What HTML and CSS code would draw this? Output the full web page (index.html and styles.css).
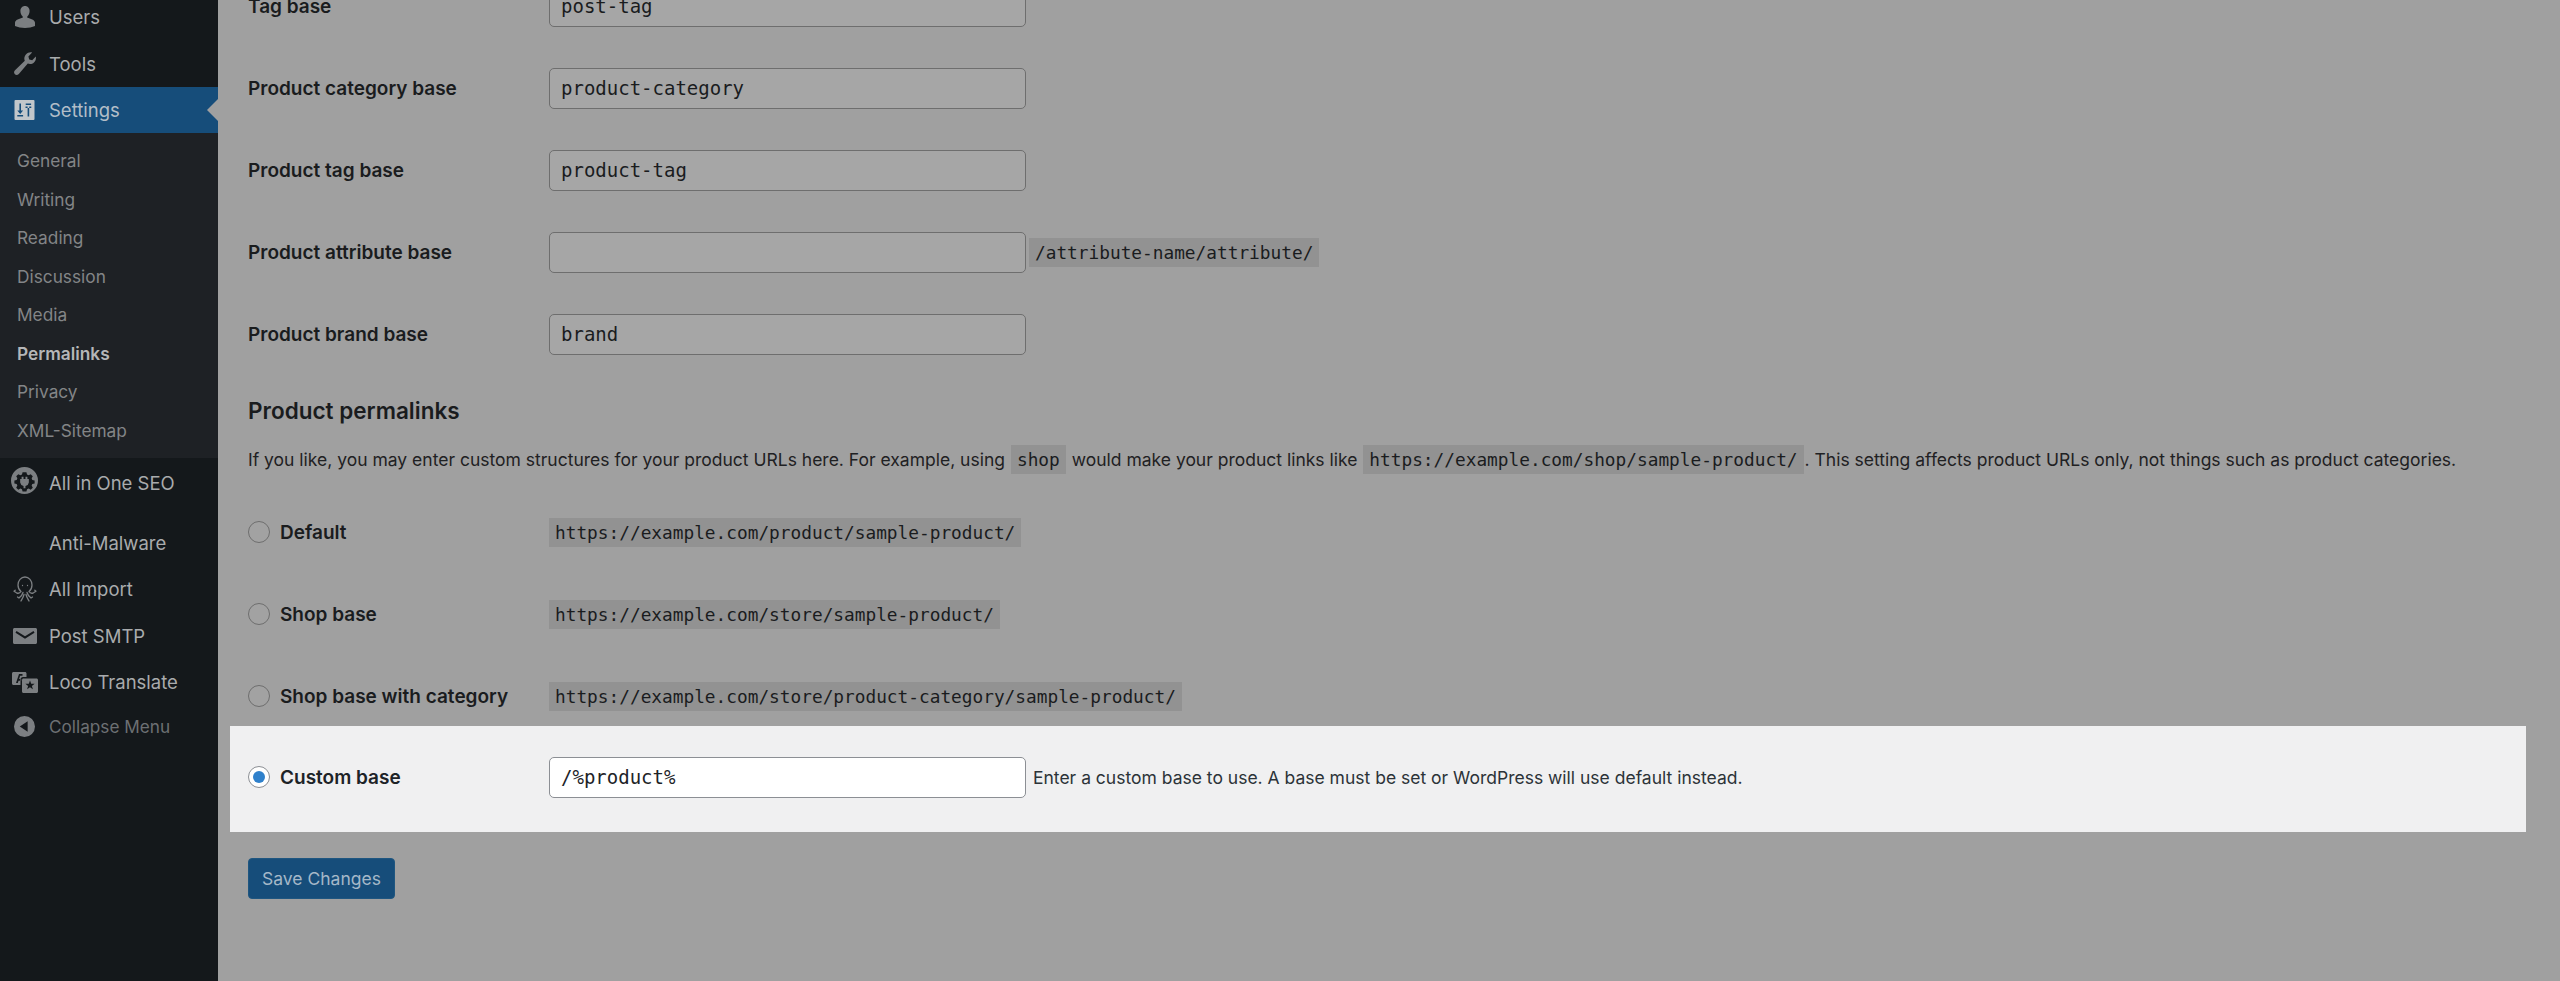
FILE: index.html
```html
<!DOCTYPE html>
<html lang="en">
<head>
<meta charset="utf-8">
<title>Permalink Settings</title>
<link rel="stylesheet" href="styles.css">
</head>
<body>
<div class="page">
  <nav class="sidebar">
    <ul class="menu">
      <li class="item"><span class="slot"><svg class="icon i-user" viewBox="0 0 20 22"><path d="M10 0c2.800 0 4.600 2.200 4.600 5 0 2.400-1 4.500-2.300 5.500v1.300c3 .7 7.700 2.200 7.700 5V20c-2.800 1.300-6.300 2-10 2s-7.200-.7-10-2v-3.200c0-2.800 4.700-4.300 7.700-5v-1.300C6.400 9.500 5.400 7.400 5.400 5c0-2.800 1.800-5 4.600-5z"/></svg></span><span>Users</span></li>
      <li class="item"><span class="slot"><svg class="icon i-tool" viewBox="0 0 23 23"><path d="M22.800 4.500c.5 2.300-.2 4.500-1.800 6-1.700 1.600-4.200 2-6.200 1.100L5.800 21.900c-1.100 1.200-2.800 1.400-3.900.3C.7 21.100 .8 19.400 2 18.300l9.800-9.600c-.9-2.100-.5-4.500 1.100-6.300C14.500.7 16.900 0 19.100.5L15.400 4.600l.8 3 3 .7z"/></svg></span><span>Tools</span></li>
      <li class="item current"><span class="slot"><svg class="icon i-settings" viewBox="0 0 20 20"><path fill-rule="evenodd" d="M1 0h18a1 1 0 0 1 1 1v18a1 1 0 0 1-1 1H1a1 1 0 0 1-1-1V1a1 1 0 0 1 1-1zM4.900 3.500v7H2.800l2.900 3.600 2.900-3.600H6.500v-7zM2.800 15v1.600h5.800V15zM13.100 6.600v9.900h1.600V6.600zM11.200 3.500v1.600h5.400V3.500zM11 6.500v1.600h5.800V6.500z"/></svg></span><span>Settings</span></li>
    </ul>
    <ul class="submenu">
      <li>General</li>
      <li>Writing</li>
      <li>Reading</li>
      <li>Discussion</li>
      <li>Media</li>
      <li class="active">Permalinks</li>
      <li>Privacy</li>
      <li>XML-Sitemap</li>
    </ul>
    <ul class="menu">
      <li class="item seo"><span class="slot"><svg class="icon i-seo" viewBox="0 0 28 28"><path fill-rule="evenodd" d="M14 0a14 14 0 1 1 0 28 14 14 0 0 1 0-28zM12 5.500l-.6 2.400-1.700.7-2.100-1.200-2.200 2.200 1.200 2.100-.7 1.700-2.400.6v3l2.400.6.7 1.700-1.200 2.100 2.200 2.200 2.100-1.200 1.700.7.600 2.400h4l.6-2.400 1.700-.7 2.100 1.200 2.200-2.200-1.200-2.100.7-1.700 2.400-.6v-3l-2.400-.6-.7-1.700 1.200-2.100-2.200-2.200-2.100 1.200-1.700-.7-.6-2.400zM11 10h2v2.500h2V10h2v2.500h1.500V16a4.500 4.500 0 0 1-3.500 3.700V22h-2v-2.300A4.500 4.500 0 0 1 9.500 16v-3.500H11z"/></svg></span><span>All in One SEO</span></li>
      <li class="item plain"><span class="slot"></span><span>Anti-Malware</span></li>
      <li class="item"><span class="slot"><svg class="icon i-import" viewBox="0 0 24 26"><path d="M8 15.500C5.800 13.800 5 11.500 5 9c0-4.500 3-8 7-8s7 3.500 7 8c0 2.500-.8 4.800-3 6.500M8 15.500c-1 1.500-3 2-4.500 1.300L1 15.200M16 15.500c1 1.500 3 2 4.500 1.300l2.500-1.600M1 15.200l1.200-1M23 15.200l-1.200-1M10 16.500c-.5 2-2 4-4 5.500l-1.500-1M14 16.500c.5 2 2 4 4 5.500l1.500-1M11 18.500c-.5 2.500-2 4.800-3 6.500M13 18.500c.5 2.500 2 4.800 3 6.500M9.500 9.500h.01M14.500 9.500h.01"/></svg></span><span>All Import</span></li>
      <li class="item"><span class="slot"><svg class="icon i-mail" viewBox="0 0 24 16"><path fill-rule="evenodd" d="M1.500 0h21c.8 0 1.500.7 1.500 1.500v13c0 .8-.7 1.500-1.500 1.500h-21C.7 16 0 15.300 0 14.500v-13C0 .7.700 0 1.500 0zM3.500 3L2.500 4.800 12 10.800l9.500-6L20.500 3 12 8.300z"/></svg></span><span>Post SMTP</span></li>
      <li class="item"><span class="slot"><svg class="icon i-loco" viewBox="0 0 26 21"><path fill-rule="evenodd" d="M1.500 0H13c.8 0 1.500.7 1.500 1.500V5H11c-1.400 0-2.500 1.100-2.500 2.500V13H1.500C.7 13 0 12.300 0 11.500V1.500C0 .7.700 0 1.500 0zM7 2L4 11h1.800l.7-2.200h2.700V7H7.100l1-3.200h2.400V2z"/><path fill-rule="evenodd" d="M11.500 6.500h13c.8 0 1.500.7 1.500 1.500v11.500c0 .8-.7 1.500-1.500 1.500h-13c-.8 0-1.500-.7-1.500-1.500V8c0-.8.700-1.500 1.500-1.500zM18 8.500l-1.200 3.200-3.400.1 2.700 2.100-1 3.300 2.900-1.900 2.900 1.900-1-3.300 2.700-2.100-3.400-.1z"/></svg></span><span>Loco Translate</span></li>
      <li class="item collapse"><span class="slot"><svg class="icon i-collapse" viewBox="0 0 20 20"><path fill-rule="evenodd" d="M10 0a10 10 0 1 1 0 20 10 10 0 0 1 0-20zM13 5L5.500 10l7.500 5z"/></svg></span><span>Collapse Menu</span></li>
    </ul>
  </nav>

  <main class="content">
    <div class="field-row"><label class="field-label">Tag base</label><span class="text-input">post-tag</span></div>
    <div class="field-row"><label class="field-label">Product category base</label><span class="text-input">product-category</span></div>
    <div class="field-row"><label class="field-label">Product tag base</label><span class="text-input">product-tag</span></div>
    <div class="field-row"><label class="field-label">Product attribute base</label><span class="text-input"></span><code class="tag tag-after">/attribute-name/attribute/</code></div>
    <div class="field-row"><label class="field-label">Product brand base</label><span class="text-input">brand</span></div>

    <h2 class="section-title">Product permalinks</h2>
    <p class="intro">If you like, you may enter custom structures for your product URLs here. For example, using <code class="tag">shop</code> would make your product links like <code class="tag">https://example.com/shop/sample-product/</code>. This setting affects product URLs only, not things such as product categories.</p>

    <div class="radio-group">
      <div class="radio-row"><label class="radio-label"><span class="radio"></span>Default</label><code class="tag">https://example.com/product/sample-product/</code></div>
      <div class="radio-row"><label class="radio-label"><span class="radio"></span>Shop base</label><code class="tag">https://example.com/store/sample-product/</code></div>
      <div class="radio-row"><label class="radio-label"><span class="radio"></span>Shop base with category</label><code class="tag">https://example.com/store/product-category/sample-product/</code></div>
    </div>

    <div class="radio-row highlight">
      <label class="radio-label"><span class="radio checked"></span>Custom base</label>
      <span class="text-input lit">/%product%</span>
      <span class="hint">Enter a custom base to use. A base must be set or WordPress will use default instead.</span>
    </div>

    <button class="save" type="button">Save Changes</button>
  </main>
</div>
</body>
</html>
```

FILE: styles.css
```css
* { box-sizing: border-box; }
html, body { margin: 0; padding: 0; height: 981px; overflow: hidden; }
body { font-family: Inter, "Liberation Sans", sans-serif; background: #a0a0a0; color: #1a1c1e; }
ul { list-style: none; margin: 0; padding: 0; }

.page { display: flex; height: 981px; overflow: hidden; }

/* Sidebar */
.sidebar { width: 218px; flex: none; height: 987px; margin-top: -6px; background: #14181b; overflow: hidden; }
.item { display: flex; align-items: center; height: 46.5px; font-size: 18.5px; color: #a9abad; position: relative; }
.slot { display: flex; align-items: center; justify-content: center; width: 49px; flex: none; }
.icon { display: block; fill: #7c7f82; flex: none; }
.i-user { width: 20px; height: 22px; }
.i-tool { width: 23px; height: 23px; }
.i-settings { width: 21px; height: 20px; fill: #c2c7cb; }
.i-seo { width: 27px; height: 27px; margin-top: -4px; }
.i-import { width: 24px; height: 26px; fill: none; stroke: #7c7f82; stroke-width: 1.3; stroke-linecap: round; stroke-linejoin: round; }
.i-mail { width: 24px; height: 16px; }
.i-loco { width: 26px; height: 21px; }
.i-collapse { width: 21px; height: 21px; }
.current { height: 46px; background: #164d7a; color: #b3bec8; }
.current::after { content: ""; position: absolute; right: 0; top: 12px; border: 11px solid transparent; border-right-color: #a0a0a0; border-left-width: 0; }
.submenu { background: #1e2125; padding: 9px 0 8px; }
.submenu li { height: 38.5px; line-height: 38.5px; padding-left: 17px; font-size: 17.3px; color: #838587; }
.submenu .active { color: #b5b6b8; font-weight: 600; }
.seo { height: 49px; }
.plain { height: 59px; padding-top: 13px; }
.collapse { height: 42px; color: #6d7073; font-size: 17.2px; }

/* Content */
.content { flex: 1; margin-top: -35px; padding: 0 34px 0 30px; min-width: 0; }
.field-row { display: flex; align-items: center; height: 82px; }
.field-label { width: 301px; flex: none; font-size: 19px; font-weight: 600; }
.text-input { display: block; width: 477px; height: 41px; flex: none; border: 1.5px solid #6e6e6e; border-radius: 5px; background: #a6a6a6; padding: 0 11px; font-family: "DejaVu Sans Mono", "Liberation Mono", monospace; font-size: 19px; line-height: 38px; }
.tag { display: inline-block; height: 29px; line-height: 29px; padding: 0 6px; background: #929292; font-family: "DejaVu Sans Mono", "Liberation Mono", monospace; font-size: 17.8px; color: #1a1c1e; }
.tag-after { margin-left: 3px; }
.section-title { margin: 22px 0 0; font-size: 22.5px; line-height: 28px; font-weight: 600; }
.intro { margin: 17px 0 0; height: 36px; line-height: 36px; font-size: 17.5px; white-space: nowrap; color: #1f2123; }
.intro .tag { margin: 0 1px; }

.radio-group { display: flex; flex-direction: column; gap: 24px; margin-top: 25px; }
.radio-row { display: flex; align-items: center; height: 58px; }
.radio-label { display: flex; align-items: center; width: 301px; flex: none; font-size: 19px; font-weight: 600; }
.radio { width: 22px; height: 22px; border-radius: 50%; border: 1.5px solid #6e6e6e; background: #a2a2a2; margin-right: 10px; flex: none; display: flex; align-items: center; justify-content: center; }
.radio.checked { background: #fff; border-color: #8c8f94; }
.radio.checked::before { content: ""; width: 12px; height: 12px; border-radius: 50%; background: #2f80cb; }

.highlight { height: 106px; margin: 1px 0 0 -18px; padding: 0 0 4px 18px; background: #f0f0f1; color: #1d2327; }
.text-input.lit { background: #fff; border-color: #8c8f94; }
.hint { margin-left: 7px; font-size: 17.5px; color: #2c3338; white-space: nowrap; }

.save { display: block; margin-top: 26px; width: 147px; height: 41px; border: 1px solid #1f5680; border-radius: 4px; background: #164d7a; color: #a5b8c8; font-family: inherit; font-size: 17.5px; padding: 0; }
```
